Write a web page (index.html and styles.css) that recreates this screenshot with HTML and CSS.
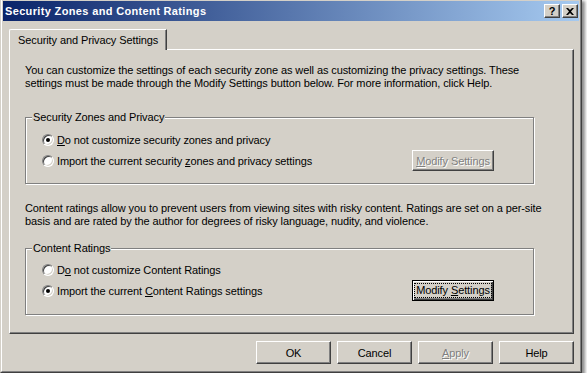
FILE: index.html
```html
<!DOCTYPE html>
<html lang="en">

<head>
    <meta charset="UTF-8">
    <meta name="viewport" content="width=device-width, initial-scale=1.0">
    <title>Security Zones and Content Ratings</title>
    <link rel="stylesheet" href="styles.css">
</head>

<body>
    <div class="window">
        <div class="frame">
            <div class="titlebar">
                <span class="title">Security Zones and Content Ratings</span>
                <div class="caption-btns">
                    <span class="cap-btn">?</span>
                    <span class="cap-btn">
                        <svg width="8" height="7" viewBox="0 0 8 7">
                            <path d="M0 0h2l2 2 2-2h2L5 3.5 8 7H6L4 5 2 7H0l3-3.5z" fill="#000" />
                        </svg>
                    </span>
                </div>
            </div>

            <div class="client">
                <div class="tabs">
                    <div class="tab">Security and Privacy Settings</div>
                </div>

                <div class="panel">
                    <p class="desc intro">You can customize the settings of each security zone as well as customizing the privacy settings. These<br>settings must be made through the Modify Settings button below. For more information, click Help.</p>

                    <fieldset class="group">
                        <legend>Security Zones and Privacy</legend>
                        <div class="row">
                            <label class="radio"><span class="dot checked"></span><span><u>D</u>o not customize security zones and privacy</span></label>
                        </div>
                        <div class="row">
                            <label class="radio"><span class="dot"></span><span>Import the current security <u>z</u>ones and privacy settings</span></label>
                            <button class="btn small" disabled><u>M</u>odify Settings</button>
                        </div>
                    </fieldset>

                    <p class="desc ratings">Content ratings allow you to prevent users from viewing sites with risky content. Ratings are set on a per-site<br>basis and are rated by the author for degrees of risky language, nudity, and violence.</p>

                    <fieldset class="group second">
                        <legend>Content Ratings</legend>
                        <div class="row">
                            <label class="radio"><span class="dot"></span><span>D<u>o</u> not customize Content Ratings</span></label>
                        </div>
                        <div class="row">
                            <label class="radio"><span class="dot checked"></span><span>Import the current <u>C</u>ontent Ratings settings</span></label>
                            <button class="btn small focused"><span class="focus">Modify <u>S</u>ettings</span></button>
                        </div>
                    </fieldset>
                </div>

                <div class="buttons">
                    <button class="btn">OK</button>
                    <button class="btn">Cancel</button>
                    <button class="btn" disabled><u>A</u>pply</button>
                    <button class="btn">Help</button>
                </div>
            </div>
        </div>
    </div>
</body>

</html>
```

FILE: styles.css
```css
body {
    margin: 0;
    background-color: #fff;
    font-family: "Liberation Sans", Arial, sans-serif;
    font-size: 11px;
    letter-spacing: -0.1px;
    color: #000;
}

.window {
    width: 582px;
    height: 375px;
    margin-top: -2px;
    box-sizing: border-box;
    background-color: #d4d0c8;
    border: 1px solid;
    border-color: #d4d0c8 #404040 #404040 #d4d0c8;
    box-shadow: 3px 3px 3px rgba(0, 0, 0, 0.45);
}

.frame {
    height: 100%;
    box-sizing: border-box;
    border: 1px solid;
    border-color: #fff #808080 #808080 #fff;
    padding: 1px;
    display: flex;
    flex-direction: column;
}

/* title bar */
.titlebar {
    height: 20px;
    display: flex;
    align-items: center;
    padding-left: 2px;
    background: linear-gradient(to right, #0a246a, #a6caf0);
}

.title {
    color: #fff;
    font-weight: bold;
    font-size: 11px;
    letter-spacing: 0.35px;
}

.caption-btns {
    margin-left: auto;
    margin-right: 1px;
    display: flex;
    gap: 2px;
}

.cap-btn {
    width: 16px;
    height: 14px;
    box-sizing: border-box;
    display: flex;
    align-items: center;
    justify-content: center;
    background-color: #d4d0c8;
    border: 1px solid;
    border-color: #fff #404040 #404040 #fff;
    box-shadow: inset -1px -1px 0 #808080;
    font-weight: bold;
    font-size: 11px;
    line-height: 12px;
}

/* tabs */
.client {
    flex: 1;
    padding: 8px 5px 0 6px;
}

.tabs {
    display: flex;
}

.tab {
    position: relative;
    z-index: 1;
    height: 20px;
    line-height: 20px;
    margin-bottom: -1px;
    padding: 0 8px;
    background-color: #d4d0c8;
    border: 1px solid;
    border-bottom: none;
    border-color: #fff #404040 #fff #fff;
    border-top-left-radius: 2px;
    box-shadow: inset -1px 0 0 #808080;
}

.panel {
    width: 565px;
    height: 285px;
    box-sizing: border-box;
    padding: 14px 0 0 15px;
    border: 1px solid;
    border-color: #fff #404040 #404040 #fff;
    box-shadow: inset -1px -1px 0 #808080;
}

.desc {
    width: 509px;
    margin: 0;
    line-height: 13px;
    white-space: nowrap;
}

/* group boxes */
.group {
    width: 509px;
    box-sizing: border-box;
    margin: 21px 0 0;
    padding: 5px 0 12px 6px;
    border: 1px solid #808080;
    box-shadow: inset 1px 1px 0 #fff, 1px 1px 0 #fff;
}

.group + .desc {
    margin-top: 18px;
}

.group.second {
    margin-top: 14px;
    padding-top: 4px;
    padding-bottom: 13px;
}

.group legend {
    padding: 0 1px;
    line-height: 13px;
    background-color: #d4d0c8;
}

.row {
    height: 21px;
    display: flex;
    align-items: center;
    justify-content: space-between;
    padding: 0 39px 0 10px;
}

.radio {
    display: flex;
    align-items: center;
    white-space: nowrap;
}

.dot {
    width: 12px;
    height: 12px;
    box-sizing: border-box;
    margin-right: 3px;
    border-radius: 50%;
    background-color: #fff;
    border: 1px solid;
    border-color: #808080 #fff #fff #808080;
    box-shadow: inset 1px 1px 0 #404040, inset -1px -1px 0 #d4d0c8;
    display: flex;
    align-items: center;
    justify-content: center;
}

.dot.checked::after {
    content: "";
    width: 4px;
    height: 4px;
    border-radius: 50%;
    background-color: #000;
}

/* push buttons */
.btn {
    width: 75px;
    height: 23px;
    padding: 0;
    font-family: inherit;
    font-size: 11px;
    letter-spacing: -0.1px;
    white-space: nowrap;
    color: #000;
    background-color: #d4d0c8;
    border: 1px solid;
    border-color: #fff #404040 #404040 #fff;
    box-shadow: inset -1px -1px 0 #808080;
}

.btn.small {
    width: 82px;
    height: 21px;
}

.btn:disabled {
    color: #808080;
    text-shadow: 1px 1px 0 #fff;
}

.btn.focused {
    border: 1px solid #000;
    box-shadow: inset 1px 1px 0 #fff, inset -1px -1px 0 #404040, inset -2px -2px 0 #808080;
}

.focus {
    display: block;
    margin: 0 2px;
    line-height: 13px;
    outline: 1px dotted #000;
}

.buttons {
    display: flex;
    justify-content: flex-end;
    gap: 6px;
    margin-top: 7px;
    width: 565px;
}
```
